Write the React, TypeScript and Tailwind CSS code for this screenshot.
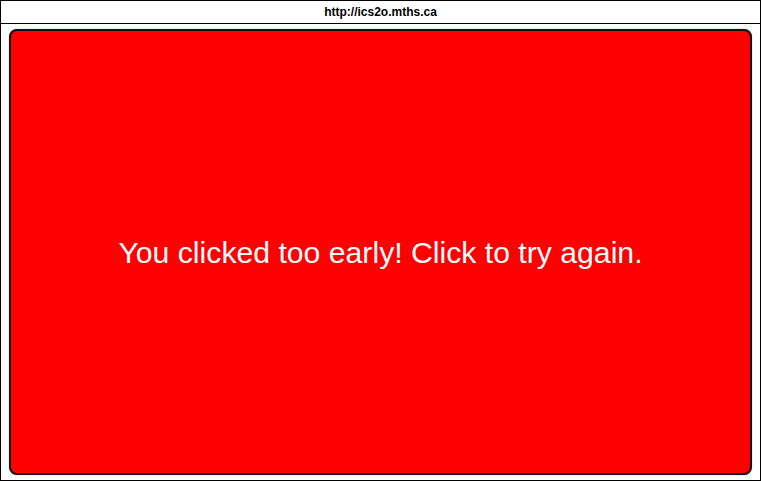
export default function App() {
  return (
    <div className="w-[761px] h-[481px] border border-black bg-white flex flex-col" style={{ fontFamily: '"Liberation Sans", Arial, sans-serif' }}>
      <div className="h-[23px] border-b border-black flex items-center justify-center text-[12px] font-bold text-black shrink-0">
        http://ics2o.mths.ca
      </div>
      <div className="flex-1 pt-[5px] pb-[5px] pl-[8px] pr-[8px] flex">
        <div className="flex-1 bg-[#ff0000] border-2 border-[#111] rounded-[8px] flex items-center justify-center shadow-[0_0_1px_#666]">
          <span className="text-white text-[30.2px] leading-none pt-[2px]">You clicked too early! Click to try again.</span>
        </div>
      </div>
    </div>
  );
}
